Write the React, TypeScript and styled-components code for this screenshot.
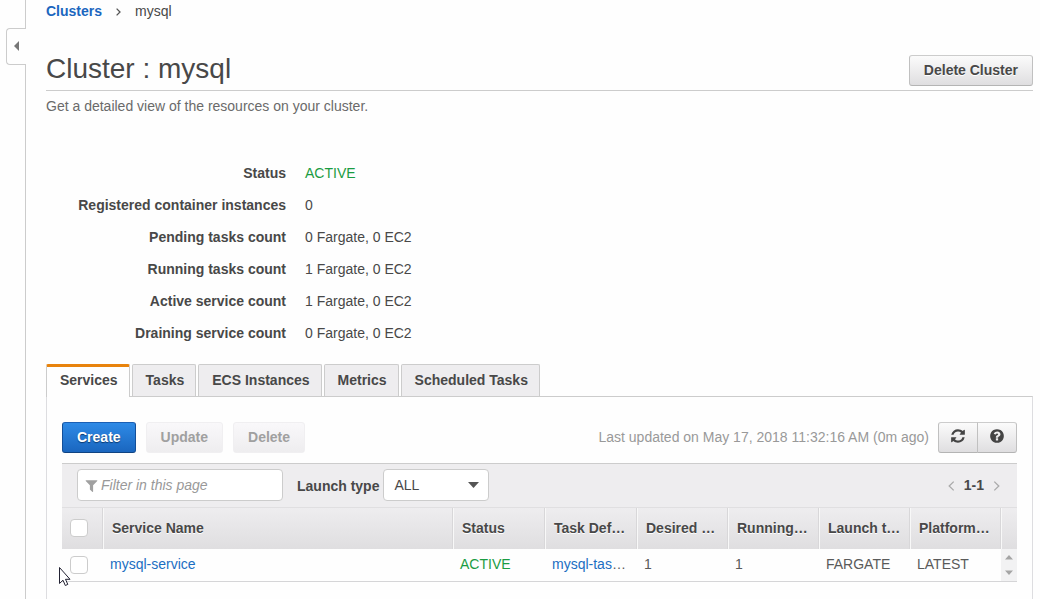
import React from 'react';
import styled, { createGlobalStyle, css } from 'styled-components';

const GlobalStyle = createGlobalStyle`
  *, *::before, *::after { box-sizing: border-box; }
  body {
    margin: 0;
    background: #fefefe;
    color: #484848;
    font: 14px/20px "Liberation Sans", Arial, sans-serif;
  }
  button, input, select { font: inherit; color: inherit; }
  a { color: #1b6ec2; text-decoration: none; }
`;

const Page = styled.div`
  display: flex;
  min-height: 100vh;
`;

const Rail = styled.aside`
  flex: none;
  width: 26px;
  padding: 28px 0 0 6px;
  border-right: 1px solid #ccc;
`;

const CollapseButton = styled.button`
  display: flex;
  align-items: center;
  width: 20px;
  height: 37px;
  padding: 0 0 2px 7px;
  border: 1px solid #ccc;
  border-right: 0;
  border-radius: 4px 0 0 4px;
  background: #fefefe;
`;

const Main = styled.main`
  flex: 1;
  min-width: 0;
  display: flex;
  flex-direction: column;
  padding: 1px 7px 0 20px;
`;

const Breadcrumb = styled.nav`
  display: flex;
  align-items: center;
  a { color: #1b66bf; font-weight: bold; }
  svg { margin: 1px 14px 0; }
`;

const TitleBar = styled.header`
  display: flex;
  align-items: flex-end;
  justify-content: space-between;
  padding: 32px 0 4px;
  border-bottom: 1px solid #ccc;
`;

const Title = styled.h1`
  margin: 0;
  padding-bottom: 1px;
  font-size: 28px;
  line-height: 32px;
  font-weight: normal;
`;

const Intro = styled.p`
  margin: 5px 0 0;
  color: #6a6a6a;
`;

const buttonKinds = {
  normal: css`
    border-color: #ccc #c0c0c0 #b4b4b4;
    background: linear-gradient(#fbfbfb, #dfdee0);
    text-shadow: 0 1px 0 #fff;
  `,
  primary: css`
    border-color: #1a5fb4 #134f99 #0f4382;
    background: linear-gradient(#2e8ae6, #1a66bf);
    color: #fff;
    text-shadow: 0 1px 1px #0b3a70;
  `,
  disabled: css`
    border-color: #f0eff1;
    background: linear-gradient(#f9f8fa, #eeedef);
    color: #a0a0a0;
  `,
};

const Button = styled.button<{ $kind?: keyof typeof buttonKinds }>`
  display: flex;
  align-items: center;
  justify-content: center;
  height: 31px;
  padding: 0 14px 2px;
  border: 1px solid;
  border-radius: 3px;
  font-weight: bold;
  white-space: nowrap;
  ${({ $kind = 'normal' }) => buttonKinds[$kind]}
`;

const Details = styled.dl`
  display: grid;
  grid-template-columns: 240px 1fr;
  column-gap: 19px;
  row-gap: 12px;
  margin: 47px 0 0;
  dt { text-align: right; font-weight: bold; }
  dd { margin: 0; }
`;

const StatusText = styled.span`
  color: #1a9c42;
`;

const Tabs = styled.div`
  display: flex;
  gap: 2px;
  margin-top: 21px;
`;

const Tab = styled.button<{ $active?: boolean }>`
  height: 32px;
  padding: 0 11px 1px 13px;
  border: 1px solid #ccc;
  border-bottom: 0;
  border-radius: 2px 2px 0 0;
  background: #eeedef;
  font-weight: bold;
  white-space: nowrap;
  ${({ $active }) =>
    $active &&
    css`
      height: 33px;
      margin-bottom: -1px;
      padding-bottom: 4px;
      border-top: 3px solid #e8830c;
      background: #fefefe;
      z-index: 1;
    `}
`;

const Panel = styled.section`
  flex: 1;
  padding: 25px 15px 17px;
  border: 1px solid #ccc;
  border-color: #ccc #dddde0;
  border-bottom: 0;
`;

const Toolbar = styled.div`
  display: flex;
  align-items: center;
  gap: 10px;
  margin-bottom: 10px;
`;

const Updated = styled.span`
  margin-left: auto;
  margin-right: -1px;
  padding-bottom: 2px;
  color: #999;
`;

const ButtonGroup = styled.div`
  display: flex;
  ${Button} {
    width: 40px;
    padding: 0 0 3px;
  }
  ${Button}:first-child { border-radius: 3px 0 0 3px; }
  ${Button}:last-child { margin-left: -1px; border-radius: 0 3px 3px 0; }
`;

const Grid = styled.div`
  position: relative;
`;

const FilterBar = styled.div`
  display: flex;
  align-items: center;
  height: 45px;
  padding: 0 15px 1px;
  border-top: 1px solid #ccc;
  border-bottom: 1px solid #e0dfe1;
  background: #eeedef;
`;

const FilterField = styled.label`
  display: flex;
  align-items: center;
  gap: 2px;
  width: 206px;
  height: 32px;
  padding: 0 6px;
  border: 1px solid #ccc;
  border-radius: 4px;
  background: #fff;
  input {
    flex: 1;
    min-width: 0;
    padding: 0;
    border: 0;
    background: none;
    outline: 0;
  }
  input::placeholder { color: #999; font-style: italic; opacity: 1; }
`;

const SelectLabel = styled.label`
  margin: 2px 4px 0 14px;
  font-weight: bold;
`;

const SelectBox = styled.div`
  display: grid;
  align-items: center;
  width: 106px;
  select, svg { grid-area: 1 / 1; }
  select {
    appearance: none;
    height: 32px;
    padding: 0 10px;
    border: 1px solid #ccc;
    border-radius: 4px;
    background: #fff;
  }
  svg { justify-self: end; margin-right: 10px; pointer-events: none; }
`;

const Pager = styled.div`
  display: flex;
  align-items: center;
  gap: 9px;
  margin: 0 2px 0 auto;
  font-weight: bold;
`;

const PagerButton = styled.button`
  display: flex;
  padding: 2px 0 0;
  border: 0;
  background: none;
`;

const Table = styled.table`
  width: 100%;
  table-layout: fixed;
  border-collapse: separate;
  border-spacing: 0;
  th, td {
    padding: 0 7px;
    text-align: left;
    white-space: nowrap;
    overflow: hidden;
  }
  th {
    height: 41px;
    padding: 0 8px 1px;
    border-right: 1px solid #d8d7d9;
    border-left: 1px solid #f8f8f8;
    background: linear-gradient(#eeedef, #dfdee0);
    text-shadow: 0 1px 0 #fff;
  }
  th:first-child { border-left: 0; }
  th:last-child { border-right: 0; }
  td {
    height: 33px;
    padding-bottom: 2px;
    border-bottom: 1px solid #d5d5d7;
    color: #5a5a5a;
  }
  td:first-child { padding: 0 8px; }
`;

const Col = styled.col<{ $width?: number }>`
  width: ${({ $width }) => ($width ? `${$width}px` : 'auto')};
`;

const Checkbox = styled.input.attrs({ type: 'checkbox' })`
  appearance: none;
  display: block;
  width: 18px;
  height: 18px;
  margin: 0;
  border: 1px solid #ccc;
  border-radius: 4px;
  background: #fff;
`;

const ScrollCell = styled.td`
  && { padding: 0; background: #f2f2f3; }
  svg { display: block; margin: 0 auto; }
`;

const Pointer = styled.svg`
  position: absolute;
  left: -4px;
  bottom: -5px;
  pointer-events: none;
`;

const summary = [
  ['Registered container instances', '0'],
  ['Pending tasks count', '0 Fargate, 0 EC2'],
  ['Running tasks count', '1 Fargate, 0 EC2'],
  ['Active service count', '1 Fargate, 0 EC2'],
  ['Draining service count', '0 Fargate, 0 EC2'],
];

const tabs = ['Services', 'Tasks', 'ECS Instances', 'Metrics', 'Scheduled Tasks'];

const columns = ['Service Name', 'Status', 'Task Def…', 'Desired …', 'Running…', 'Launch t…', 'Platform…'];

const columnWidths = [41, undefined, 92, 92, 91, 91, 91, 91, 16];

const glyphs = {
  refresh:
    'M1639 1056q0 5-1 7-64 268-268 434.500t-478 166.500q-146 0-282.500-55t-243.500-157l-129 129q-19 19-45 19t-45-19-19-45v-448q0-26 19-45t45-19h448q26 0 45 19t19 45-19 45l-137 137q71 66 161 102t187 36q134 0 250-65t186-179q11-17 53-117 8-23 30-23h192q13 0 22.500 9.500t9.500 22.500zm25-800v448q0 26-19 45t-45 19h-448q-26 0-45-19t-19-45 19-45l138-138q-148-137-349-137-134 0-250 65t-186 179q-11 17-53 117-8 23-30 23h-199q-13 0-22.500-9.500t-9.500-22.500v-7q65-268 270-434.500t480-166.500q146 0 284 55.500t245 156.500l130-129q19-19 45-19t45 19 19 45z',
  help:
    'M1024 1376v-192q0-14-9-23t-23-9h-192q-14 0-23 9t-9 23v192q0 14 9 23t23 9h192q14 0 23-9t9-23zm256-672q0-88-55.500-163t-138.500-116-170-41q-243 0-371 213-15 24 8 42l132 100q7 6 19 6 16 0 25-12 53-68 86-92 34-24 86-24 48 0 85.500 26t37.500 59q0 38-20 61t-68 45q-63 28-115.500 86.500t-52.500 125.500v36q0 14 9 23t23 9h192q14 0 23-9t9-23q0-19 21.500-49.500t54.500-49.500q32-18 49-28.500t46-35 44.500-48 28-60.500 12.500-81zm384 192q0 209-103 385.500t-279.500 279.500-385.500 103-385.500-103-279.500-279.500-103-385.500 103-385.500 279.500-279.500 385.500-103 385.500 103 279.500 279.500 103 385.500z',
  filter:
    'M1595 295q17 41-14 70l-493 493v742q0 42-39 59-13 5-25 5-27 0-45-19l-256-256q-19-19-19-45v-486l-493-493q-31-29-14-70 17-39 59-39h1280q42 0 59 39z',
};

function Glyph({ name, size, color }: { name: keyof typeof glyphs; size: number; color: string }) {
  return (
    <svg width={size} height={size} viewBox="0 0 1792 1792" fill={color} aria-hidden="true">
      <path d={glyphs[name]} />
    </svg>
  );
}

function Chevron({ left, color }: { left?: boolean; color: string }) {
  return (
    <svg width="7" height="10" viewBox="0 0 7 10" fill="none" stroke={color} strokeWidth="1.300" aria-hidden="true">
      <path d={left ? 'M5.700 .6 1.200 5l4.500 4.400' : 'M1.300 .6 5.800 5l-4.500 4.400'} />
    </svg>
  );
}

export default function App() {
  return (
    <>
      <GlobalStyle />
      <Page>
        <Rail>
          <CollapseButton aria-label="Open navigation">
            <svg width="5" height="10" viewBox="0 0 5 10" fill="#777" aria-hidden="true">
              <path d="M5 0v10L0 5z" />
            </svg>
          </CollapseButton>
        </Rail>
        <Main>
          <Breadcrumb aria-label="Breadcrumb">
            <a href="#clusters">Clusters</a>
            <svg width="5" height="8" viewBox="0 0 5 8" fill="none" stroke="#555" strokeWidth="1.300" aria-hidden="true">
              <path d="M.6 .6 4 4 .6 7.400" />
            </svg>
            <span>mysql</span>
          </Breadcrumb>
          <TitleBar>
            <Title>Cluster : mysql</Title>
            <Button>Delete Cluster</Button>
          </TitleBar>
          <Intro>Get a detailed view of the resources on your cluster.</Intro>
          <Details>
            <dt>Status</dt>
            <dd><StatusText>ACTIVE</StatusText></dd>
            {summary.map(([label, value]) => (
              <React.Fragment key={label}>
                <dt>{label}</dt>
                <dd>{value}</dd>
              </React.Fragment>
            ))}
          </Details>
          <Tabs role="tablist">
            {tabs.map((tab, i) => (
              <Tab key={tab} role="tab" aria-selected={i === 0} $active={i === 0}>{tab}</Tab>
            ))}
          </Tabs>
          <Panel>
            <Toolbar>
              <Button $kind="primary">Create</Button>
              <Button $kind="disabled" disabled>Update</Button>
              <Button $kind="disabled" disabled>Delete</Button>
              <Updated>Last updated on May 17, 2018 11:32:16 AM (0m ago)</Updated>
              <ButtonGroup>
                <Button aria-label="Refresh"><Glyph name="refresh" size={16} color="#444" /></Button>
                <Button aria-label="Help"><Glyph name="help" size={16} color="#444" /></Button>
              </ButtonGroup>
            </Toolbar>
            <Grid>
              <FilterBar>
                <FilterField>
                  <Glyph name="filter" size={15} color="#a0a0a0" />
                  <input type="text" placeholder="Filter in this page" aria-label="Filter in this page" />
                </FilterField>
                <SelectLabel htmlFor="launch-type">Launch type</SelectLabel>
                <SelectBox>
                  <select id="launch-type" defaultValue="ALL">
                    <option>ALL</option>
                  </select>
                  <svg width="11" height="6" viewBox="0 0 11 6" fill="#555" aria-hidden="true">
                    <path d="M0 0h11L5.500 6z" />
                  </svg>
                </SelectBox>
                <Pager>
                  <PagerButton aria-label="Previous page"><Chevron left color="#aaa" /></PagerButton>
                  <span>1-1</span>
                  <PagerButton aria-label="Next page"><Chevron color="#aaa" /></PagerButton>
                </Pager>
              </FilterBar>
              <Table>
                <colgroup>
                  {columnWidths.map((width, i) => <Col key={i} $width={width} />)}
                </colgroup>
                <thead>
                  <tr>
                    <th><Checkbox aria-label="Select all services" /></th>
                    {columns.map((name) => <th key={name} scope="col">{name}</th>)}
                    <th aria-hidden="true" />
                  </tr>
                </thead>
                <tbody>
                  <tr>
                    <td><Checkbox aria-label="Select mysql-service" /></td>
                    <td><a href="#mysql-service">mysql-service</a></td>
                    <td><StatusText>ACTIVE</StatusText></td>
                    <td><a href="#task-definition">mysql-tas</a>…</td>
                    <td>1</td>
                    <td>1</td>
                    <td>FARGATE</td>
                    <td>LATEST</td>
                    <ScrollCell aria-hidden="true">
                      <svg width="8" height="20" viewBox="0 0 8 20" fill="#a5a5a5">
                        <path d="M0 4.500h8L4 0zM0 15.500h8L4 20z" />
                      </svg>
                    </ScrollCell>
                  </tr>
                </tbody>
              </Table>
              <Pointer width="13" height="20" viewBox="0 0 13 20" fill="#fff" stroke="#223" strokeLinejoin="round" aria-hidden="true">
                <path d="M1.500 .5v16l3.500-3.300 2.300 5.300 2.500-1.100-2.300-5.100h4.500z" />
              </Pointer>
            </Grid>
          </Panel>
        </Main>
      </Page>
    </>
  );
}
